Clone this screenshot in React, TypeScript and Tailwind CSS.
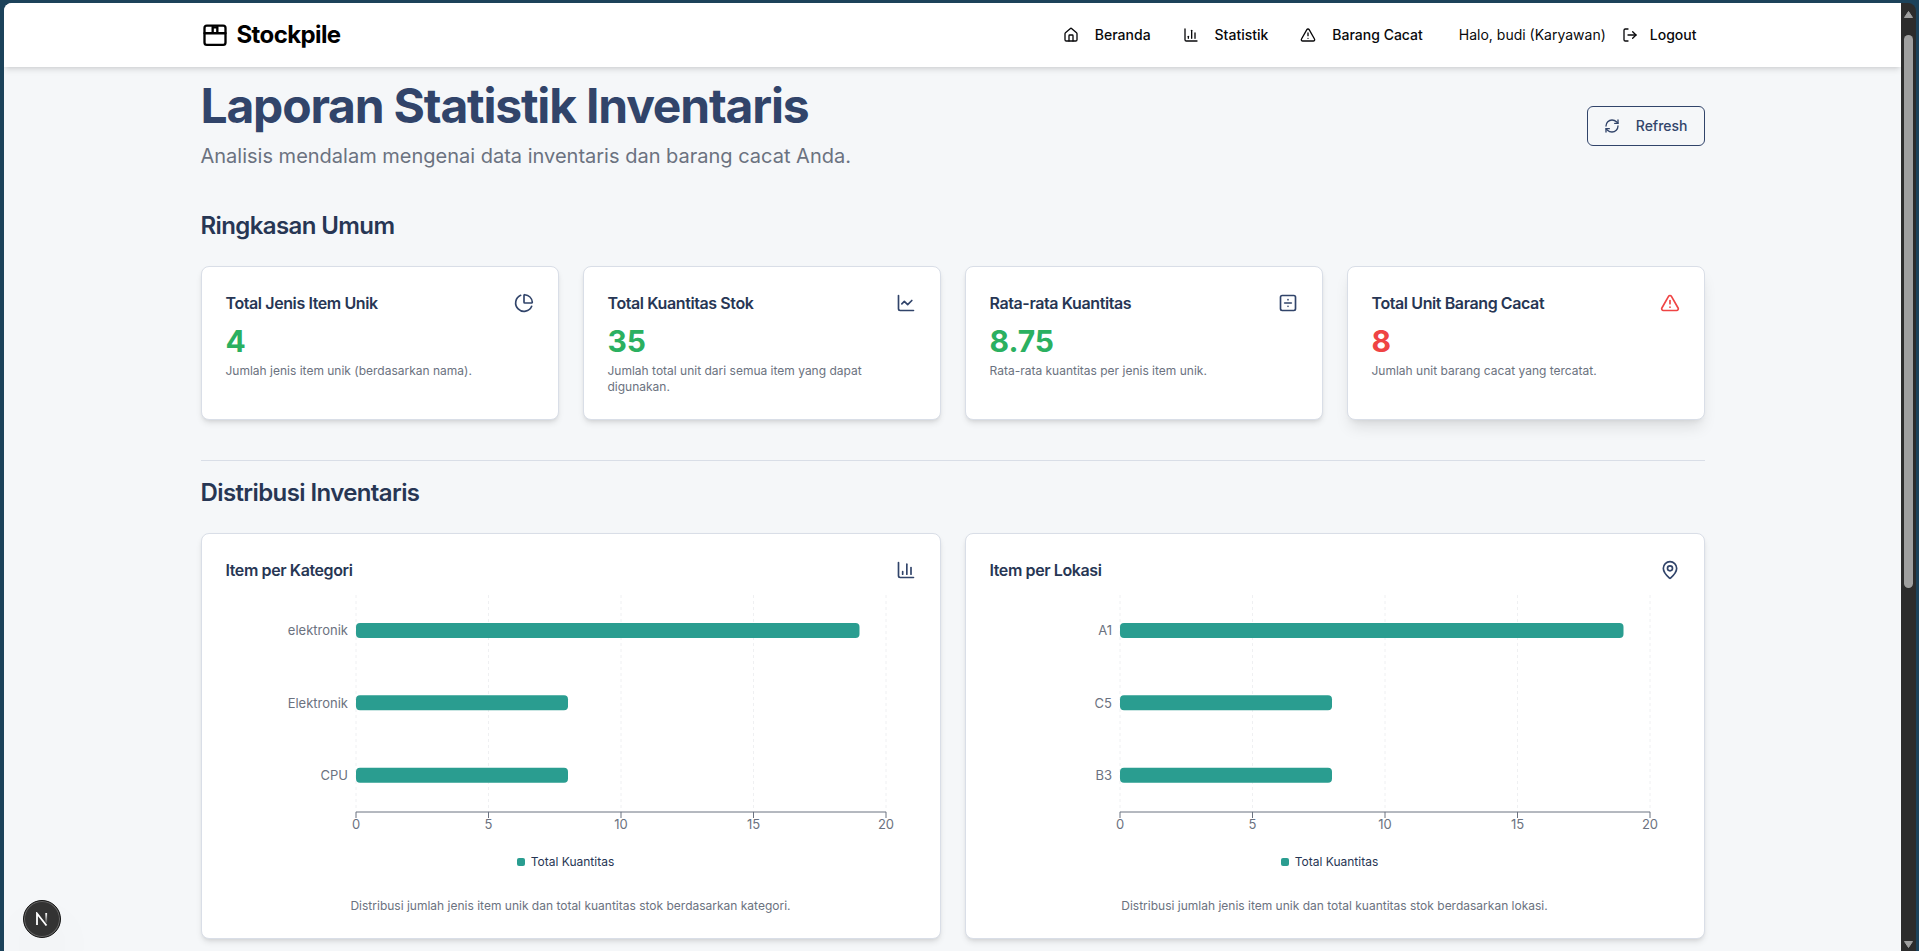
import React from "react";
import {
  ChartColumn,
  ChartLine,
  ChartPie,
  House,
  LogOut,
  MapPin,
  RefreshCw,
  SquareDivide,
  TriangleAlert,
  type LucideIcon,
} from "lucide-react";

type Row = { label: string; value: number };

const navLinks: { label: string; icon: LucideIcon }[] = [
  { label: "Beranda", icon: House },
  { label: "Statistik", icon: ChartColumn },
  { label: "Barang Cacat", icon: TriangleAlert },
];

const stats: { title: string; value: string; note: string; icon: LucideIcon; danger?: boolean }[] = [
  { title: "Total Jenis Item Unik", value: "4", note: "Jumlah jenis item unik (berdasarkan nama).", icon: ChartPie },
  { title: "Total Kuantitas Stok", value: "35", note: "Jumlah total unit dari semua item yang dapat digunakan.", icon: ChartLine },
  { title: "Rata-rata Kuantitas", value: "8.75", note: "Rata-rata kuantitas per jenis item unik.", icon: SquareDivide },
  { title: "Total Unit Barang Cacat", value: "8", note: "Jumlah unit barang cacat yang tercatat.", icon: TriangleAlert, danger: true },
];

const charts: { title: string; note: string; icon: LucideIcon; rows: Row[] }[] = [
  {
    title: "Item per Kategori",
    note: "Distribusi jumlah jenis item unik dan total kuantitas stok berdasarkan kategori.",
    icon: ChartColumn,
    rows: [
      { label: "elektronik", value: 19 },
      { label: "Elektronik", value: 8 },
      { label: "CPU", value: 8 },
    ],
  },
  {
    title: "Item per Lokasi",
    note: "Distribusi jumlah jenis item unik dan total kuantitas stok berdasarkan lokasi.",
    icon: MapPin,
    rows: [
      { label: "A1", value: 19 },
      { label: "C5", value: 8 },
      { label: "B3", value: 8 },
    ],
  },
];

const ticks = [0, 5, 10, 15, 20];
const axisMax = 20;
const plotHeight = 217;
const barHeight = 15;

function BarChart({ rows, title }: { rows: Row[]; title: string }) {
  const band = plotHeight / rows.length;
  return (
    <figure className="flex h-[300px] flex-col pt-[5px]">
      <div className="pr-[30px] pl-[130px]">
        <svg role="img" aria-label={title} width="100%" height={plotHeight} className="block overflow-visible text-[13px]">
          {ticks.map((t) => {
            const x = `${(t / axisMax) * 100}%`;
            return (
              <g key={t}>
                <line x1={x} x2={x} y1={0} y2={plotHeight} stroke="#eff0f2" strokeDasharray="3 3" />
                <line x1={x} x2={x} y1={plotHeight} y2={plotHeight + 6} stroke="#6b7280" />
                <text x={x} y={plotHeight + 17} textAnchor="middle" fill="#6b7280">
                  {t}
                </text>
              </g>
            );
          })}
          <line x1="0" x2="100%" y1={plotHeight} y2={plotHeight} stroke="#6b7280" />
          {rows.map((row, i) => {
            const mid = band * (i + 0.5);
            return (
              <g key={row.label}>
                <rect x="0" y={mid - barHeight / 2 - 0.67} width={`${(row.value / axisMax) * 100}%`} height={barHeight} rx={4} fill="#2a9d90" />
                <text x={-8} y={mid + 4.3} textAnchor="end" fill="#6b7280">
                  {row.label}
                </text>
              </g>
            );
          })}
        </svg>
      </div>
      <figcaption className="mt-[42px] flex items-center justify-center gap-1.5 pr-[30px] pl-5 text-xs text-[#273654]">
        <span className="size-2 rounded-[2px] bg-[#2a9d90]" />
        Total Kuantitas
      </figcaption>
    </figure>
  );
}

function StoreLogo() {
  return (
    <svg width="28" height="28" viewBox="0 0 24 24" fill="none" stroke="currentColor" strokeWidth="2" strokeLinecap="round" strokeLinejoin="round" aria-hidden="true">
      <rect x="3" y="4" width="18" height="16.500" rx="2" />
      <path d="M3 10.500h18M10 5v5M14 5v5M10 5.500h4" />
    </svg>
  );
}

function Scrollbar() {
  return (
    <div aria-hidden="true" className="flex w-[15px] shrink-0 flex-col items-center rounded-tr-lg bg-[#2c2c2c] pt-2 pb-[3px]">
      <svg width="9" height="7" viewBox="0 0 9 7" className="shrink-0">
        <path d="M4.500 0.500 8.500 6.500H0.500Z" fill="#9f9f9f" stroke="#9f9f9f" strokeLinejoin="round" />
      </svg>
      <div className="mt-[17px] flex w-[9px] grow flex-col">
        <div className="h-[61%] rounded-full bg-[#9f9f9f]" />
      </div>
      <svg width="9" height="7" viewBox="0 0 9 7" className="shrink-0">
        <path d="M4.500 6.500 0.500 0.500H8.500Z" fill="#9f9f9f" stroke="#9f9f9f" strokeLinejoin="round" />
      </svg>
    </div>
  );
}

export default function App() {
  return (
    <div className="flex h-screen bg-[#1c425a] pt-[3px] pr-[3px] pl-1 font-['Inter',sans-serif] text-[#273654]">
      <div className="relative flex min-w-0 grow flex-col overflow-hidden rounded-tl-lg bg-[#f5f7f9]">
        <header className="z-10 shrink-0 bg-white text-[#09090b] shadow-md">
          <div className="mx-auto flex h-16 max-w-[1536px] items-center justify-between px-4">
            <a href="#" className="flex items-center gap-2 text-2xl font-bold tracking-tight text-black">
              <StoreLogo />
              Stockpile
            </a>
            <div className="flex items-center">
              <nav className="flex items-center">
                {navLinks.map(({ label, icon: Icon }) => (
                  <a key={label} href="#" className="flex items-center gap-4 px-4 text-sm font-medium">
                    <Icon size={16} />
                    {label}
                  </a>
                ))}
              </nav>
              <span className="ml-5 text-sm">Halo, budi (Karyawan)</span>
              <button type="button" className="ml-2 flex items-center gap-3 px-2 text-sm font-medium">
                <LogOut size={16} />
                Logout
              </button>
            </div>
          </div>
        </header>

        <main className="mx-auto w-full max-w-[1536px] px-4 pt-[15px]">
          <div className="flex items-center justify-between">
            <div>
              <h1 className="text-5xl font-bold tracking-tight text-[#31446a]">Laporan Statistik Inventaris</h1>
              <p className="mt-3 text-xl text-[#6b7280]">Analisis mendalam mengenai data inventaris dan barang cacat Anda.</p>
            </div>
            <button type="button" className="flex h-10 items-center gap-4 rounded-md border border-[#31446a] px-4 text-sm font-medium text-[#31446a]">
              <RefreshCw size={16} />
              Refresh
            </button>
          </div>

          <section className="mt-10">
            <h2 className="text-2xl font-semibold tracking-tight">Ringkasan Umum</h2>
            <div className="mt-6 grid grid-cols-4 gap-6">
              {stats.map(({ title, value, note, icon: Icon, danger }) => (
                <article key={title} className={`rounded-lg border border-[#d9dee7] bg-white p-6 ${danger ? "shadow-lg" : "shadow-md"}`}>
                  <div className="flex items-center justify-between">
                    <h3 className="text-base font-semibold tracking-tight">{title}</h3>
                    <Icon size={20} className={danger ? "text-[#ef4444]" : "text-[#31446a]"} />
                  </div>
                  <p className={`mt-2 text-3xl font-bold ${danger ? "text-[#ef4444]" : "text-[#2bb060]"}`}>{value}</p>
                  <p className="mt-1 text-xs text-[#6b7280]">{note}</p>
                </article>
              ))}
            </div>
          </section>

          <hr className="mt-10 border-[#d9dee7]" />

          <section className="mt-4">
            <h2 className="text-2xl font-semibold tracking-tight">Distribusi Inventaris</h2>
            <div className="mt-6 grid grid-cols-2 gap-6">
              {charts.map(({ title, note, icon: Icon, rows }) => (
                <article key={title} className="rounded-lg border border-[#d9dee7] bg-white p-6 shadow-md">
                  <div className="flex items-center justify-between">
                    <h3 className="text-base font-semibold tracking-tight">{title}</h3>
                    <Icon size={20} className="text-[#31446a]" />
                  </div>
                  <div className="mt-2">
                    <BarChart rows={rows} title={title} />
                  </div>
                  <p className="mt-2 text-center text-xs text-[#6b7280]">{note}</p>
                </article>
              ))}
            </div>
          </section>
        </main>

        <button type="button" aria-label="Next.js" className="absolute bottom-[13px] left-[19px] flex size-[38px] items-center justify-center rounded-full border border-[#151515] bg-[#333333] shadow-2xl ring-1 ring-[#666666] ring-inset">
          <svg width="14" height="14" viewBox="0 0 14 14" fill="none" strokeWidth="1.800">
            <defs>
              <linearGradient id="stem" x1="0" y1="0" x2="0" y2="1" gradientUnits="objectBoundingBox">
                <stop stopColor="#fff" />
                <stop offset="1" stopColor="#fff" stopOpacity="0.1" />
              </linearGradient>
            </defs>
            <path d="M2 13V1.500L11.500 13.500" stroke="#fff" />
            <rect x="10.300" y="1" width="1.800" height="10" fill="url(#stem)" />
          </svg>
        </button>
      </div>
      <Scrollbar />
    </div>
  );
}
